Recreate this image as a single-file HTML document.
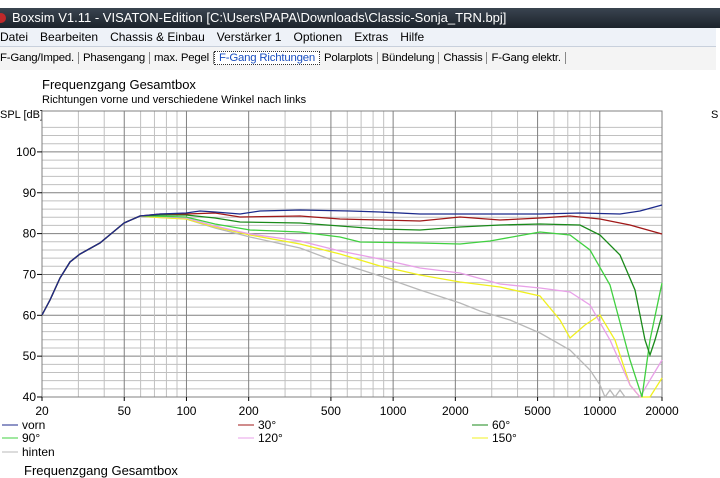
<!DOCTYPE html>
<html><head><meta charset="utf-8"><style>
*{margin:0;padding:0;box-sizing:border-box}
body{width:720px;height:471px;overflow:hidden;background:#fff;font-family:"Liberation Sans",sans-serif;position:relative}
.title{position:absolute;left:0;top:8px;width:720px;height:20px;background:linear-gradient(#3a4450,#1c232b);color:#fff;font-size:13px;line-height:20px;padding-left:12px}
.title:before{content:"";position:absolute;left:-4px;top:5px;width:10px;height:10px;border-radius:50%;background:#c0282a}
.menu{position:absolute;left:0;top:28px;width:716px;height:19px;background:#eef2f8;border-bottom:1px solid #c8d0dc;font-size:12px;line-height:18px;white-space:nowrap}
.menu span{margin-right:12px}
.tabs{position:absolute;left:0;top:47px;width:716px;height:23px;background:#f4f4f4;font-size:11.4px;line-height:22px;white-space:nowrap;letter-spacing:-0.2px}
.tabs span{padding:0 4px;border-right:1px solid #888}
.tabs .act{border:1px dotted #333;color:#1a4fc0;background:#fff}
.t1{position:absolute;left:42px;top:77px;font-size:13px}
.t2{position:absolute;left:42px;top:94px;font-size:11px}
.lab{position:absolute;font-size:11px}
svg{position:absolute;left:0;top:0}
</style></head><body>
<div class="title">Boxsim V1.11 - VISATON-Edition [C:\Users\PAPA\Downloads\Classic-Sonja_TRN.bpj]</div>
<div class="menu"><span>Datei</span><span>Bearbeiten</span><span>Chassis &amp; Einbau</span><span>Verstärker 1</span><span>Optionen</span><span>Extras</span><span>Hilfe</span></div>
<div class="tabs"><span style="padding-left:0">F-Gang/Imped.</span><span>Phasengang</span><span>max. Pegel</span><span class="act">F-Gang Richtungen</span><span>Polarplots</span><span>Bündelung</span><span>Chassis</span><span>F-Gang elektr.</span></div>
<div class="t1">Frequenzgang Gesamtbox</div>
<div class="t2">Richtungen vorne und verschiedene Winkel nach links</div>
<div class="lab" style="left:0;top:109px">SPL [dB]</div>
<div class="lab" style="left:711px;top:109px">S</div>
<svg id="g" width="720" height="471"></svg>
<div class="lab" style="left:24px;top:463px;font-size:13px">Frequenzgang Gesamtbox</div>
<script>
var s='',X=f=>42+206.67*Math.log10(f/20),Y=d=>397-(d-40)*4.085;
for(var d=40;d<=106;d+=2){var y=Y(d);s+='<line x1="42" x2="662" y1="'+y+'" y2="'+y+'" stroke="'+(d%10==0?'#808080':'#c0c0c0')+'"/>';}
var dec=[10,100,1000,10000];dec.forEach(b=>{for(var m=1;m<10;m++){var f=b*m;if(f<20||f>20000)continue;var x=X(f);var dk=[20,50,100,200,500,1000,2000,5000,10000,20000].indexOf(f)>=0;s+='<line x1="'+x+'" x2="'+x+'" y1="111" y2="397" stroke="'+(dk?'#808080':'#c0c0c0')+'"/>';}});
s+='<rect x="42" y="111" width="620" height="286" fill="none" stroke="#808080"/>';
[40,50,60,70,80,90,100].forEach(d=>{var y=Y(d);s+='<line x1="37" x2="42" y1="'+y+'" y2="'+y+'" stroke="#000"/><text x="36" y="'+(y+4)+'" text-anchor="end" font-size="12" font-family="Liberation Sans">'+d+'</text>';});
[20,50,100,200,500,1000,2000,5000,10000,20000].forEach(f=>{var x=X(f);s+='<line x1="'+x+'" x2="'+x+'" y1="397" y2="401" stroke="#000"/><text x="'+x+'" y="415" text-anchor="middle" font-size="12" font-family="Liberation Sans">'+f+'</text>';});
var base='42,315 50,300 60,278 70,262 80,254 100,243 124,223 140,216 ';
var C=[
['#b8b8b8',base+'150,217 186,219 215,228 250,237 300,248 340,263 380,276 420,290 460,303 480,311 510,320 540,333 570,350 590,370 600,385 605,397 610,390 615,397 620,390 625,397'],
['#f0f020',base+'150,217 186,219 215,227 250,235 300,244 340,254 380,266 420,275 460,282 500,287 540,296 560,320 570,338 585,325 600,315 615,340 630,385 640,397 650,397 662,378'],
['#e8a0e8',base+'150,216 186,218 215,226 250,234 300,241 340,251 380,259 420,268 460,273 500,284 540,288 570,292 590,305 610,340 630,385 640,397 650,380 662,360'],
['#40d040',base+'150,216 186,217 215,224 250,230 300,232 340,237 360,242 420,243 460,244 490,241 540,232 570,235 590,250 610,285 630,360 642,397 650,340 662,283'],
['#1a8a1a',base+'160,215 186,215 215,218 240,222 300,223 340,226 380,229 420,230 460,227 500,225 540,224 580,225 600,235 620,255 635,290 645,340 650,355 655,340 662,315'],
['#a01818',base+'160,214 186,214 215,213 240,217 300,216 340,219 380,220 420,221 460,217 500,220 540,218 570,216 600,219 630,225 662,234'],
['#1c2a8c',base+'160,214 186,213 200,211 215,212 240,214 260,211 300,210 350,211 380,212 420,214 460,214 500,214 540,214 580,213 620,214 640,211 662,205']];
C.forEach(c=>{s+='<polyline fill="none" stroke="'+c[0]+'" stroke-width="1.3" points="'+c[1]+'"/>';});
var L=[['#1c2a8c','vorn',2,425],['#a01818','30°',238,425],['#1a8a1a','60°',472,425],['#40d040','90°',2,438],['#e8a0e8','120°',238,438],['#f0f020','150°',472,438],['#b8b8b8','hinten',2,452]];
L.forEach(l=>{s+='<line x1="'+l[2]+'" x2="'+(l[2]+16)+'" y1="'+l[3]+'" y2="'+l[3]+'" stroke="'+l[0]+'"/><text x="'+(l[2]+20)+'" y="'+(l[3]+4)+'" font-size="12" font-family="Liberation Sans">'+l[1]+'</text>';});
document.getElementById('g').innerHTML=s;
</script>
</body></html>
